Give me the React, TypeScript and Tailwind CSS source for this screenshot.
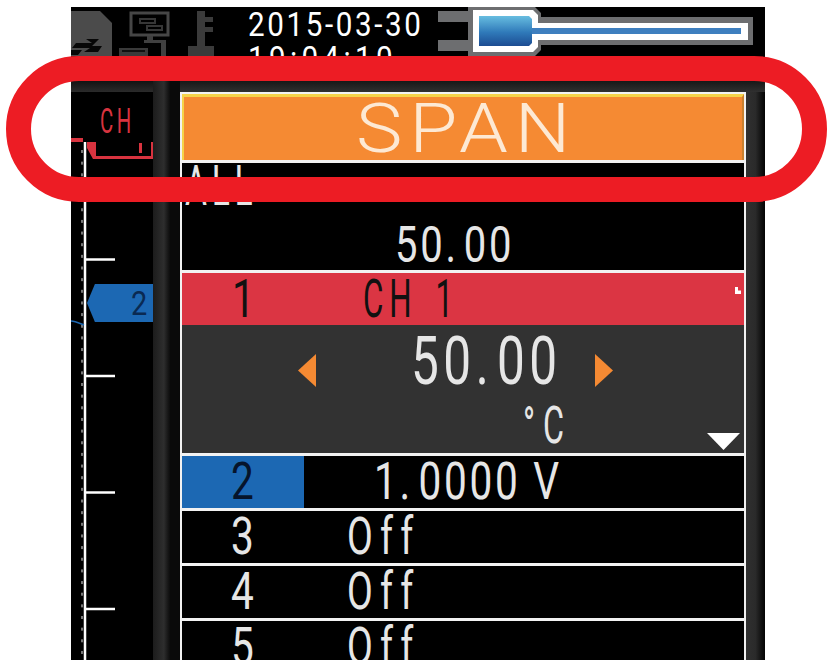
const roboto = "font-['Roboto','Liberation_Sans',sans-serif]";
const narrow = "inline-block origin-left whitespace-nowrap";

function StatusIcons() {
  return (
    <svg width="150" height="49" viewBox="71 7 150 49" className="shrink-0">
      <path d="M71 11H100L112 23V56H71Z" fill="#4b4b4b" />
      <path d="M76 43H92L86 39H99L92 46H102L98 52H84L90 48H72ZM71 50H82L78 55H71Z" fill="#070707" />
      <path d="M131 13H168V35H131Z" fill="none" stroke="#464646" strokeWidth="3" />
      <path d="M140 19H155V23H140ZM147 26H162V30H147Z" fill="none" stroke="#363636" strokeWidth="2" />
      <path d="M147 36H153V40H166V56H161V43H144V40H147Z" fill="#404040" />
      <path d="M119 48H148V56H119Z" fill="#3a3a3a" />
      <path d="M122 50H145V52H122Z" fill="#111" />
      <path d="M197 11H205V17H213V22H205V27H213V32H205V46H214V56H188V46H197Z" fill="#3b3b3b" />
    </svg>
  );
}

function LevelBar() {
  return (
    <svg width="316" height="49" viewBox="438 7 316 49" className="shrink-0">
      <defs>
        <linearGradient id="knob" x1="0" y1="0" x2="0" y2="1">
          <stop offset="0" stopColor="#67bde0" />
          <stop offset="0.55" stopColor="#2f79b9" />
          <stop offset="1" stopColor="#1c4c92" />
        </linearGradient>
      </defs>
      <path d="M438 11H468V22H438ZM438 40H468V51H438Z" fill="#6d6e70" />
      <path d="M468 7H535L541 13V17H753V45H541V50L535 56H468Z" fill="#6d6e70" />
      <path d="M473 10H533L538 15V23H748V40H538V47L533 52H473Z" fill="#fff" />
      <path d="M479 16H529L532 19V43L529 46H479Z" fill="url(#knob)" />
      <path d="M532 28H741V34H532Z" fill="#3e7fbf" />
    </svg>
  );
}

function Axis() {
  const dots = Array.from({ length: 44 }, (_, i) => 150 + i * 11.65);
  return (
    <svg width="82" height="580" viewBox="71 80 82 580" className="absolute inset-0">
      <path d="M71 138H83V142H71Z" fill="#d8333f" />
      <path d="M87 142H96V156H151V142H153V159H93L87 148Z" fill="#d8333f" />
      <path d="M139 143H142V153H139Z" fill="#d8333f" />
      <path d="M85 142V660" stroke="#fff" strokeWidth="2.5" />
      {dots.map((y) => (
        <rect key={y} x="81" y={y} width="2" height="3" fill="#777" />
      ))}
      {[259.5, 376, 492.5, 609].map((y) => (
        <path key={y} d={`M86 ${y}H115`} stroke="#fff" strokeWidth="2.5" />
      ))}
      <path d="M71 321C75 321 79 323 84 325" fill="none" stroke="#1d68b3" strokeWidth="1.5" />
    </svg>
  );
}

function ChannelRow({ n, children, blue }: { n: string; children: React.ReactNode; blue?: boolean }) {
  return (
    <div className="flex h-[55px] shrink-0 border-b-[3px] border-[#f2f2f2] text-[52px] leading-[52px] text-[#e6e6e6]">
      <div className={`h-full w-[122px] shrink-0 pl-[49px] ${blue ? "bg-[#1c68b3] text-[#06142b]" : ""}`}>
        <span className={`${narrow} scale-x-[0.78]`}>{n}</span>
      </div>
      {children}
    </div>
  );
}

function OffValue() {
  return (
    <div className="pl-[43px]">
      <span className={`${narrow} scale-x-[0.72] tracking-[10px]`}>Off</span>
    </div>
  );
}

export default function App() {
  return (
    <div className={`relative h-[662px] w-[836px] overflow-hidden bg-white ${roboto}`}>
      <div className="ml-[71px] flex h-[653px] w-[694px] translate-y-[7px] flex-col bg-black">
        <div className="flex h-[73px] shrink-0 items-start overflow-hidden">
          <StatusIcons />
          <div className="ml-[27px] w-[190px] shrink-0 text-[34px] leading-[34px] text-white">
            <div><span className={`${narrow} scale-x-[0.87] tracking-[3px]`}>2015-03-30</span></div>
            <div><span className={`${narrow} scale-x-[0.87] tracking-[5px]`}>19:04:10</span></div>
          </div>
          <LevelBar />
        </div>
        <div className="flex min-h-0 flex-1">
          <div className="relative w-[82px] shrink-0">
            <div className="h-[12px] bg-gradient-to-b from-[#111] to-[#2b2b2b]" />
            <div className="pl-[29px] pt-[11px] text-[35px] leading-[38px] text-[#d8333f]">
              <span className={`${narrow} scale-x-[0.58] tracking-[6px]`}>CH</span>
            </div>
            <Axis />
            <div className="absolute left-[16px] top-[204px] flex h-[38px] w-[66px] items-center bg-[#1c68b3] pl-[44px] text-[34px] text-[#0a2a52] [clip-path:polygon(12%_0,100%_0,100%_100%,12%_100%,0_50%)]">
              <span className={`${narrow} scale-x-[0.85]`}>2</span>
            </div>
          </div>
          <div className="w-[27px] shrink-0 bg-gradient-to-r from-[#1c1c1c] via-[#2e2e2e] via-40% to-[#0a0a0a] to-65%" />
          <div className="flex min-w-0 flex-1 flex-col">
            <div className="h-[12px] shrink-0 bg-gradient-to-b from-[#161616] to-[#303030]" />
            <div className="flex min-h-0 flex-1">
              <div className="flex w-[566px] flex-col overflow-hidden border-x-[2px] border-t-[2px] border-[#f2f2f2]">
                <div className="flex h-[66px] shrink-0 items-center justify-center border-x-[2px] border-t-[3px] border-l-[#f5d44a] border-r-[#c9802f] border-t-[#f5d44a] bg-[#f58a33] text-[#fde9d4]">
                  <span className="inline-block origin-center scale-x-[1.15] pl-[6px] text-[68px] font-light tracking-[6px]">SPAN</span>
                </div>
                <div className="h-[113px] shrink-0 border-y-[3px] border-[#f2f2f2] text-[#e6e6e6]">
                  <div className="pl-[3px] text-[56px] leading-[46px]">
                    <span className={`${narrow} scale-x-[0.6] tracking-[8px]`}>ALL</span>
                  </div>
                  <div className="pl-[213px] pt-[11px] text-[50px] leading-[50px]">
                    <span className={`${narrow} scale-x-[0.8] tracking-[3.5px]`}><span className="mr-[6px]">50.</span>00</span>
                  </div>
                </div>
                <div className="flex h-[52px] shrink-0 bg-[#db3543] text-[54px] leading-[52px] text-[#111]">
                  <div className="w-[122px] shrink-0 pl-[50px]">
                    <span className={`${narrow} scale-x-[0.75]`}>1</span>
                  </div>
                  <div className="pl-[59px]">
                    <span className={`${narrow} scale-x-[0.58] tracking-[10px] [word-spacing:8px]`}>CH 1</span>
                  </div>
                  <div className="ml-auto mr-[3px] mt-[14px] h-[7px] w-[6px] bg-white [clip-path:polygon(0_0,50%_0,50%_50%,100%_50%,100%_100%,0_100%)]" />
                </div>
                <div className="relative h-[128px] shrink-0 bg-[#323232] text-[#e6e6e6]">
                  <div className="flex items-start pl-[116px]">
                    <div className="mt-[29px] h-[33px] w-[18px] shrink-0 bg-[#f58a33] [clip-path:polygon(100%_0,100%_100%,0_50%)]" />
                    <div className="ml-[95px] mt-[5px] h-[64px] w-[184px] shrink-0 text-[66px] leading-[64px]">
                      <span className={`${narrow} scale-x-[0.75] tracking-[6px]`}><span className="mr-[5px]">50.</span>00</span>
                    </div>
                    <div className="mt-[29px] h-[33px] w-[18px] shrink-0 bg-[#f58a33] [clip-path:polygon(0_0,100%_50%,0_100%)]" />
                  </div>
                  <div className="mt-[8px] pl-[341px] text-[52px] leading-[48px]">
                    <span className={`${narrow} scale-x-[0.62] tracking-[13px]`}>°C</span>
                  </div>
                  <div className="absolute bottom-[3px] right-[4px] h-[17px] w-[33px] bg-white [clip-path:polygon(0_0,100%_0,50%_100%)]" />
                </div>
                <div className="h-[3px] shrink-0 bg-[#f2f2f2]" />
                <ChannelRow n="2" blue>
                  <div className="pl-[70px]">
                    <span className={`${narrow} scale-x-[0.78] tracking-[3.5px]`}><span className="mr-[7px]">1.</span>0000 V</span>
                  </div>
                </ChannelRow>
                <ChannelRow n="3"><OffValue /></ChannelRow>
                <ChannelRow n="4"><OffValue /></ChannelRow>
                <ChannelRow n="5"><OffValue /></ChannelRow>
              </div>
              <div className="flex-1 bg-gradient-to-r from-[#303030] via-[#2a2a2a] to-[#050505]" />
            </div>
          </div>
        </div>
      </div>
      <div className="pointer-events-none absolute left-[6px] top-[56px] h-[146px] w-[821px] rounded-full border-[25px] border-[#ed1c24]" />
    </div>
  );
}
